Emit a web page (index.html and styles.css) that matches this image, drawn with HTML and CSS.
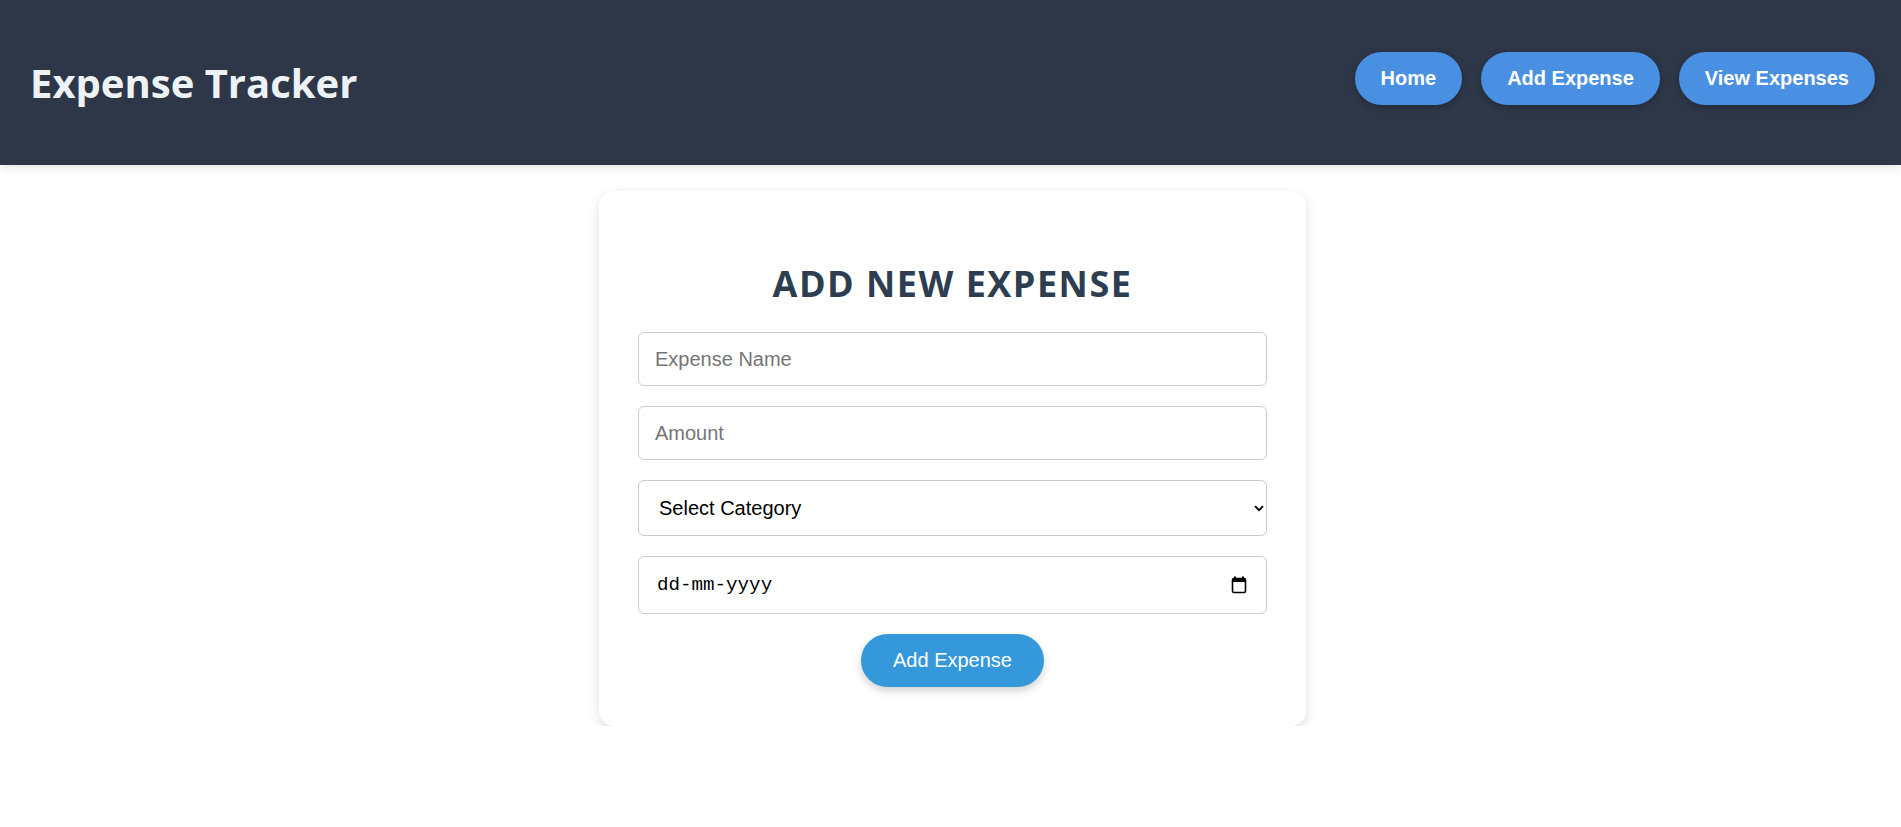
FILE: index.html
```html
<!DOCTYPE html>
<html lang="en">
<head>
<meta charset="utf-8">
<title>Expense Tracker</title>
<link rel="stylesheet" href="styles.css">
</head>
<body>
<header class="topbar">
  <h1 class="brand">Expense Tracker</h1>
  <nav class="nav">
    <a class="nav-btn" href="#">Home</a>
    <a class="nav-btn" href="#">Add Expense</a>
    <a class="nav-btn" href="#">View Expenses</a>
  </nav>
</header>
<main class="main">
  <section class="card">
    <h2 class="card-title">Add New Expense</h2>
    <form class="form">
      <input class="field" type="text" placeholder="Expense Name">
      <input class="field" type="text" placeholder="Amount">
      <div class="select-wrap">
        <select class="field select">
          <option>Select Category</option>
          <option>Food</option>
          <option>Transport</option>
          <option>Other</option>
        </select>
        <svg class="chevron" width="10" height="7" viewBox="0 0 10 7"><path d="M1 1.2 L5 5.2 L9 1.2" fill="none" stroke="#000" stroke-width="1.8"/></svg>
      </div>
      <div class="date-wrap">
        <input class="field date" type="text" placeholder="dd-mm-yyyy">
        <svg class="cal" width="16" height="18" viewBox="0 0 16 18"><path d="M4 0.5 V3 M12 0.5 V3" stroke="#000" stroke-width="2"/><rect x="1.5" y="2.5" width="13" height="14" rx="1.5" fill="none" stroke="#000" stroke-width="1.6"/><rect x="1.5" y="2.5" width="13" height="3.5" fill="#000"/></svg>
      </div>
      <button class="submit" type="button">Add Expense</button>
    </form>
  </section>
</main>
</body>
</html>
```
FILE: styles.css
```css
* { box-sizing: border-box; }
body {
  margin: 0;
  font-family: "Open Sans", "Noto Sans", sans-serif;
  background: #ffffff;
}
.topbar {
  display: flex;
  align-items: center;
  justify-content: space-between;
  height: 165px;
  padding: 0 26px 0 30px;
  background: #2d3748;
  box-shadow: 0 2px 10px rgba(0, 0, 0, 0.12);
}
.brand {
  margin: 0;
  font-family: "Open Sans", sans-serif;
  font-weight: 700;
  font-size: 40px;
  color: #edf2f7;
  letter-spacing: 0;
}
.nav {
  display: flex;
  gap: 19px;
  margin-bottom: 8px;
}
.nav-btn {
  display: block;
  padding: 15px 26px;
  line-height: 23px;
  border-radius: 30px;
  background: #4a90e2;
  color: #ffffff;
  font-family: "Liberation Sans", Arial, sans-serif;
  font-weight: 700;
  font-size: 20px;
  text-decoration: none;
  box-shadow: 0 2px 6px rgba(0, 0, 0, 0.25);
}
.main {
  display: flex;
  justify-content: center;
  padding: 26px 0 0 4px;
}
.card {
  width: 707px;
  padding: 40px 39px 39px;
  background: #ffffff;
  border-radius: 15px;
  box-shadow: 0 4px 12px rgba(0, 0, 0, 0.13);
}
.card-title {
  margin: 28px 0 24px;
  text-align: center;
  text-transform: uppercase;
  font-family: "Open Sans", sans-serif;
  font-weight: 700;
  font-size: 36px;
  line-height: 49px;
  letter-spacing: 1.5px;
  color: #2c3e50;
}
.form {
  display: flex;
  flex-direction: column;
  gap: 20px;
}
.field {
  display: block;
  width: 100%;
  height: 54px;
  padding: 0 16px;
  border: 1px solid #cccccc;
  border-radius: 6px;
  font-family: "Liberation Sans", Arial, sans-serif;
  font-size: 20px;
  color: #000000;
  background: #ffffff;
  outline: none;
}
.field::placeholder { color: #757575; }
.select-wrap, .date-wrap { position: relative; }
.select {
  height: 56px;
  padding-left: 20px;
  appearance: none;
  -webkit-appearance: none;
}
.chevron {
  position: absolute;
  right: 3px;
  top: 25px;
}
.date {
  height: 58px;
  font-family: "Liberation Mono", monospace;
  font-size: 19.2px;
  padding-left: 18px;
}
.date::placeholder { color: #000000; }
.cal {
  position: absolute;
  right: 20px;
  top: 20px;
}
.submit {
  align-self: center;
  padding: 15px 32px;
  line-height: 23px;
  border: none;
  border-radius: 30px;
  background: #3498db;
  color: #ffffff;
  font-family: "Liberation Sans", Arial, sans-serif;
  font-size: 20px;
  box-shadow: 0 4px 8px rgba(0, 0, 0, 0.18);
  cursor: pointer;
}
```
